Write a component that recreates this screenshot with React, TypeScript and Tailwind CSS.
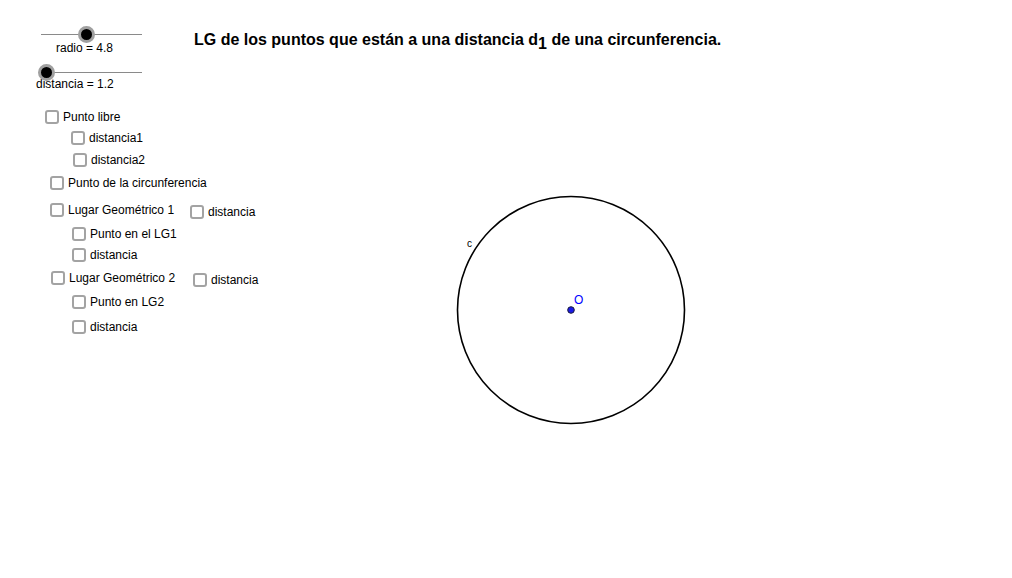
import React from "react";

const font = { fontFamily: '"Liberation Sans", Arial, sans-serif' };

function Check({ label, className = "" }: { label: string; className?: string }) {
  return (
    <label className={`flex items-center h-[14px] ${className}`}>
      <span className="block shrink-0 w-[14px] h-[14px] rounded-[3px] border-2 border-[#a3a3a3] bg-white box-border" />
      <span className="ml-[4px] text-[12px] leading-[14px] text-black whitespace-nowrap">{label}</span>
    </label>
  );
}

function Slider({
  value,
  min,
  max,
  label,
  labelClass,
  className = "",
}: {
  value: number;
  min: number;
  max: number;
  label: string;
  labelClass: string;
  className?: string;
}) {
  const pos = ((value - min) / (max - min)) * 101;
  return (
    <div className={`flex flex-col ${className}`}>
      <div className="relative ml-[41px] w-[101px] h-[16px] flex items-center">
        <div className="w-full h-px bg-[#8a8a8a]" />
        <div
          className="absolute top-[-0.5px] w-[17px] h-[17px] rounded-full bg-black border-[3px] border-[#a0a0a0] box-border"
          style={{ left: pos - 8.5 }}
        />
      </div>
      <div className={`text-[12px] leading-[14px] text-black whitespace-nowrap ${labelClass}`}>{label}</div>
    </div>
  );
}

export default function App() {
  return (
    <div className="w-[1012px] h-[578px] bg-white overflow-hidden flex" style={font}>
      {/* Left panel: sliders and checkboxes */}
      <div className="w-[194px] shrink-0 flex flex-col pt-[26px]">
        <Slider value={4.8} min={0.5} max={10} label="radio = 4.8" labelClass="ml-[56px] -mt-px" />
        <Slider value={1.2} min={0.9} max={6} label="distancia = 1.2" labelClass="ml-[36px] -mt-[3px]" className="mt-[9px]" />

        <Check label="Punto libre" className="mt-[19px] ml-[45px]" />
        <Check label="distancia1" className="mt-[7px] ml-[71px]" />
        <Check label="distancia2" className="mt-[8px] ml-[73px]" />
        <Check label="Punto de la circunferencia" className="mt-[9px] ml-[50px]" />

        <div className="mt-[13px] flex items-start w-max">
          <Check label="Lugar Geométrico 1" className="ml-[50px] w-[140px]" />
          <Check label="distancia" className="mt-[2px]" />
        </div>
        <Check label="Punto en el LG1" className="mt-[8px] ml-[72px]" />
        <Check label="distancia" className="mt-[7px] ml-[72px]" />

        <div className="mt-[9px] flex items-start w-max">
          <Check label="Lugar Geométrico 2" className="ml-[51px] w-[142px]" />
          <Check label="distancia" className="mt-[2px]" />
        </div>
        <Check label="Punto en LG2" className="mt-[8px] ml-[72px]" />
        <Check label="distancia" className="mt-[11px] ml-[72px]" />
      </div>

      {/* Drawing area */}
      <div className="flex-1 flex flex-col pt-[30px]">
        <h1 className="text-[16px] leading-[20px] font-bold text-black whitespace-nowrap">
          LG de los puntos que están a una distancia d
          <sub className="text-[16px] relative top-[4px] align-baseline">1</sub> de una circunferencia.
        </h1>
        <svg className="ml-[257px] mt-[140px] block" width={240} height={240} viewBox="0 0 240 240">
          <circle cx={120} cy={120} r={113.5} fill="none" stroke="#000" strokeWidth={1.6} />
          <circle cx={120} cy={120} r={3.3} fill="#1a1ae6" stroke="#1c1c3a" strokeWidth={1} />
          <text x={16} y={57} fontSize={10} fill="#000" style={font}>c</text>
          <text x={123} y={114} fontSize={12} fill="#0000ff" style={font}>O</text>
        </svg>
      </div>
    </div>
  );
}
